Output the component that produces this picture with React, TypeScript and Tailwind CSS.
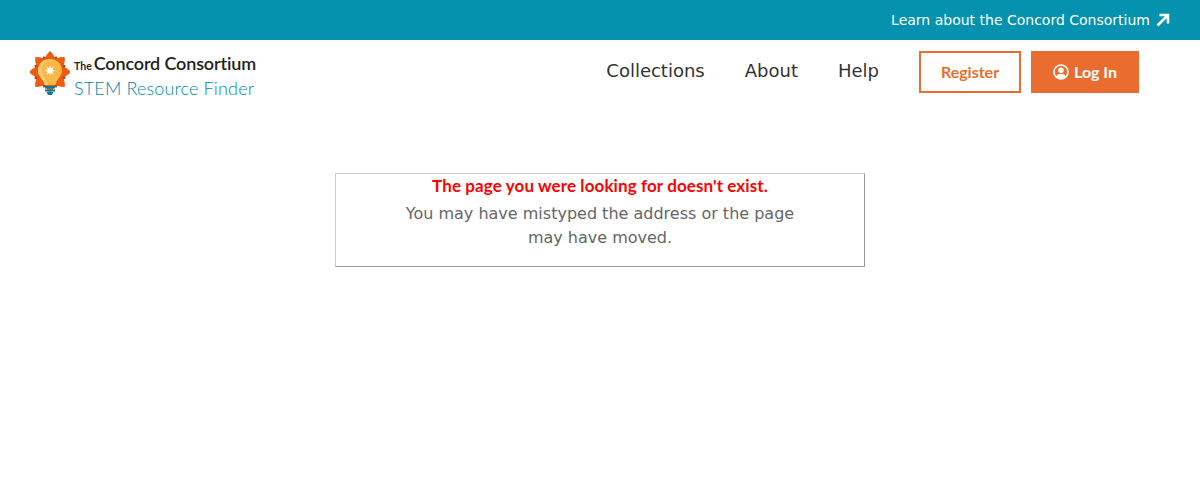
const SANS = "font-['DejaVu_Sans',Verdana,sans-serif]";

/** Orange star-burst bulb logo */
function BulbLogo() {
  const petals = [0, 45, 90, 135, 180, 225, 270, 315];
  return (
    <svg width="40" height="46" viewBox="0 0 40 46" aria-hidden="true" className="shrink-0">
      {petals.map((a) => (
        <path
          key={`d${a}`}
          d="M20 4 Q25 8 24.5 14 L20 20 L15.5 14 Q15 8 20 4 Z"
          fill="#b9420e"
          transform={`rotate(${a + 22.5} 20 21)`}
        />
      ))}
      {petals.map((a) => (
        <path
          key={`l${a}`}
          d="M20 0 Q26 5 25.5 13 L20 20 L14.5 13 Q14 5 20 0 Z"
          fill="#ec5c12"
          transform={`rotate(${a} 20 21)`}
        />
      ))}
      <path
        d="M20 8 C12.5 8 8 13.5 8 19.5 C8 24.5 11.5 27 13.5 30.5 L14.5 34 L25.5 34 L26.5 30.5 C28.5 27 32 24.5 32 19.5 C32 13.5 27.5 8 20 8 Z"
        fill="#fbb848"
      />
      <path d="M20 8 C12.5 8 8 13.5 8 19.5 C8 24.5 11.5 27 13.5 30.5 L15 34 L18 34 C16 28 11 23 12 16.5 C13 12.5 16 9.5 20 8 Z" fill="#fcca70" />
      <path
        d="M20 14.5 L20.8 17.5 L23.5 15.5 L22.2 18.8 L25.5 19.5 L22.2 20.7 L23.5 23.5 L20.8 21.8 L20 25 L19.2 21.8 L16.5 23.5 L17.8 20.7 L14.5 19.5 L17.8 18.8 L16.5 15.5 L19.2 17.5 Z"
        fill="#fff"
      />
      <rect x="15" y="35" width="10" height="2.5" fill="#0a7c95" />
      <rect x="15" y="38.5" width="10" height="2" fill="#0a7c95" />
      <path d="M16.5 41 H23.5 L22 44 H18 Z" fill="#0a7c95" />
    </svg>
  );
}

function ExternalArrow() {
  return (
    <svg width="14" height="14" viewBox="0 0 14 14" aria-hidden="true">
      <path d="M1.5 12.5 L11 3 M3.5 2 H12 V10.5" fill="none" stroke="#fff" strokeWidth="2.6" />
    </svg>
  );
}

function UserCircle() {
  return (
    <svg width="16" height="16" viewBox="0 0 16 16" aria-hidden="true">
      <circle cx="8" cy="8" r="7" fill="none" stroke="#fff" strokeWidth="1.6" />
      <circle cx="8" cy="6.3" r="2.8" fill="#fff" />
      <path d="M3.2 12.6 C4 10.4 6 9.8 8 9.8 C10 9.8 12 10.4 12.8 12.6 C11.5 14.2 9.8 14.9 8 14.9 C6.2 14.9 4.5 14.2 3.2 12.6 Z" fill="#fff" />
    </svg>
  );
}

export default function App() {
  return (
    <div className={`${SANS} min-h-[489px] bg-white`}>
      <div className="flex h-10 items-center justify-end gap-[6px] bg-[#0592af] pr-[30px] text-sm text-white">
        Learn about the Concord Consortium
        <ExternalArrow />
      </div>

      <header className="flex h-[66px] items-start justify-between pl-[30px] pr-[61px]">
        <div className="mt-[11px] flex items-start gap-[3px]">
          <BulbLogo />
          <div className="font-['Lato',sans-serif] leading-none">
            <div className="mt-[3px] flex items-baseline gap-[2px] text-[#231f20]">
              <span className="ml-[1px] text-[10.5px] font-bold">The</span>
              <span className="text-[18px] font-semibold tracking-[-0.15px]">Concord Consortium</span>
            </div>
            <div className="mt-[7px] ml-[1px] text-[18px] font-light tracking-[0.15px] text-[#0088a8]">STEM Resource Finder</div>
          </div>
        </div>

        <nav className="mt-[11px] flex items-center">
          <a className="mr-10 mb-[2px] text-lg text-[#333]">Collections</a>
          <a className="mr-10 mb-[2px] text-lg text-[#333]">About</a>
          <a className="mr-10 mb-[2px] text-lg text-[#333]">Help</a>
          <a className="mr-[10px] flex h-[42px] w-[102px] items-center justify-center border-2 border-[#ea6d2f] font-['Lato',sans-serif] text-base font-bold text-[#ea6d2f]">
            Register
          </a>
          <a className="flex h-[42px] w-[108px] items-center justify-center gap-[5px] bg-[#ea6d2f] font-['Lato',sans-serif] text-base font-bold text-white">
            <UserCircle />
            Log In
          </a>
        </nav>
      </header>

      <main className="mt-[67px] flex justify-center">
        <div className="h-[94px] w-[530px] border border-[#999] border-t-[#ccc] border-l-[#ccc] text-center">
          <h1 className="font-['Lato',sans-serif] text-[17px] leading-6 font-bold tracking-[0.1px] text-[#f00]">
            The page you were looking for doesn't exist.
          </h1>
          <p className="mx-auto mt-1 w-[420px] text-base leading-6 text-[#666]">
            You may have mistyped the address or the page may have moved.
          </p>
        </div>
      </main>
    </div>
  );
}
